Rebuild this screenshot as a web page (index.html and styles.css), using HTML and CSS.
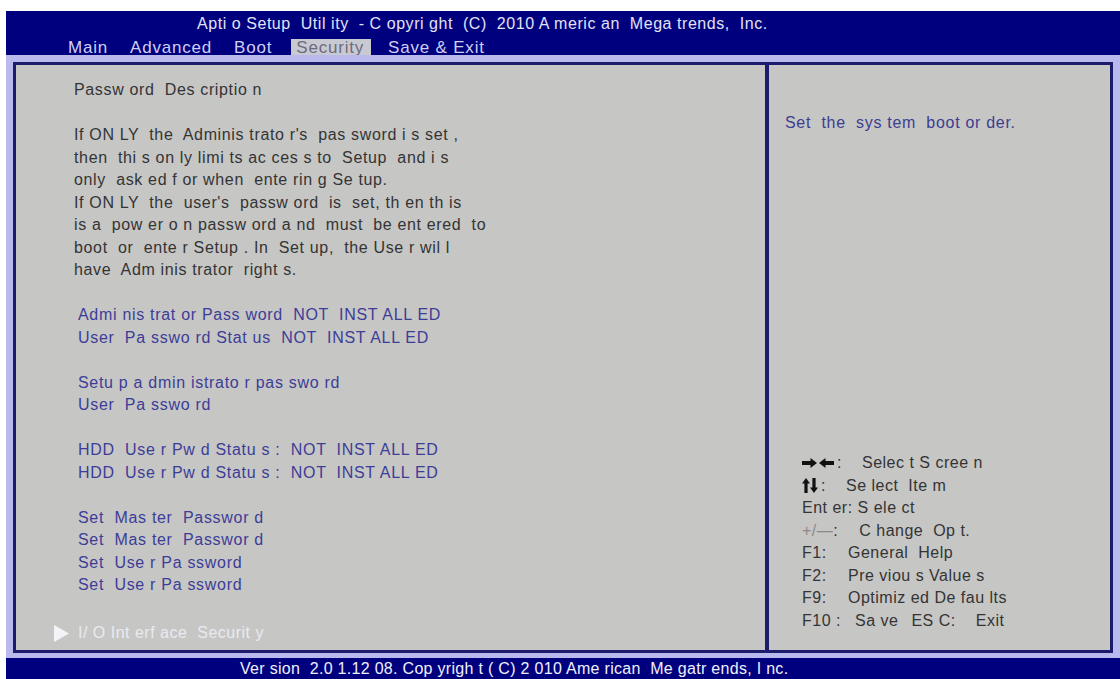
FILE: index.html
```html
<!DOCTYPE html>
<html>
<head>
<meta charset="utf-8">
<link rel="stylesheet" href="styles.css">
</head>
<body>
<div class="screen">
  <div class="header">
    <div class="title">Apti o Setup  Util ity  - C opyri ght  (C)  2010 A meric an  Mega trends,  Inc.</div>
    <div class="tabs">
      <span class="tab">Main</span>
      <span class="tab">Advanced</span>
      <span class="tab">Boot</span>
      <span class="tab active">Security</span>
      <span class="tab">Save &amp; Exit</span>
    </div>
  </div>
  <div class="body">
    <div class="panels">
      <div class="main-panel">
        <div class="line desc">Passw ord  Des criptio n</div>
        <div class="line blank"></div>
        <div class="line desc">If ON LY  the  Adminis trato r's  pas sword i s set ,</div>
        <div class="line desc">then  thi s on ly limi ts ac ces s to  Setup  and i s</div>
        <div class="line desc">only  ask ed f or when  ente rin g Se tup.</div>
        <div class="line desc">If ON LY  the  user's  passw ord  is  set, th en th is</div>
        <div class="line desc">is a  pow er o n passw ord a nd  must  be ent ered  to</div>
        <div class="line desc">boot  or  ente r Setup . In  Set up,  the Use r wil l</div>
        <div class="line desc">have  Adm inis trator  right s.</div>
        <div class="line blank"></div>
        <div class="line item">Admi nis trat or Pass word  NOT  INST ALL ED</div>
        <div class="line item">User  Pa sswo rd Stat us  NOT  INST ALL ED</div>
        <div class="line blank"></div>
        <div class="line item">Setu p a dmin istrato r pas swo rd</div>
        <div class="line item">User  Pa sswo rd</div>
        <div class="line blank"></div>
        <div class="line item">HDD  Use r Pw d Statu s :  NOT  INST ALL ED</div>
        <div class="line item">HDD  Use r Pw d Statu s :  NOT  INST ALL ED</div>
        <div class="line blank"></div>
        <div class="line item">Set  Mas ter  Passwor d</div>
        <div class="line item">Set  Mas ter  Passwor d</div>
        <div class="line item">Set  Use r Pa ssword</div>
        <div class="line item">Set  Use r Pa ssword</div>
        <div class="line blank"></div>
        <div class="line submenu"><svg class="tri" width="15" height="17" viewBox="0 0 15 17"><polygon points="0,0 15,8.5 0,17" fill="#f4f4f8"/></svg>I/ O Int erf ace  Securit y</div>
      </div>
      <div class="side-panel">
        <div class="help">Set  the  sys tem  boot or der.</div>
        <div class="keys">
          <div class="key-line"><svg class="arrows" width="32" height="10" viewBox="0 0 32 10"><path d="M0 3 H8.5 V0 L15 5 L8.5 10 V7 H0 Z" fill="#111"/><path d="M32 3 H23.5 V0 L17 5 L23.5 10 V7 H32 Z" fill="#111"/></svg><span class="k-sep">:</span><span class="k-desc wide">Selec t S cree n</span></div>
          <div class="key-line"><svg class="arrows" width="16" height="15" viewBox="0 0 16 15"><path d="M4 0 L8 5.5 H5.6 V15 H2.4 V5.5 H0 Z" fill="#111"/><path d="M12 15 L16 9.5 H13.6 V0 H10.4 V9.5 H8 Z" fill="#111"/></svg><span class="k-sep">:</span><span class="k-desc mid">Se lect  Ite m</span></div>
          <div class="key-line">Ent er: S ele ct</div>
          <div class="key-line"><span class="faint">+/—</span>:<span class="k-desc plus">C hange  Op t.</span></div>
          <div class="key-line"><span class="fkey">F1:</span><span class="k-desc">General  Help</span></div>
          <div class="key-line"><span class="fkey">F2:</span><span class="k-desc">Pre viou s Value s</span></div>
          <div class="key-line"><span class="fkey">F9:</span><span class="k-desc">Optimiz ed De fau lts</span></div>
          <div class="key-line"><span class="fkey f10">F10 :</span><span class="k-desc save">Sa ve</span><span class="k-esc">ES C:</span><span class="k-exit">Exit</span></div>
        </div>
      </div>
    </div>
  </div>
  <div class="footer">Ver sion  2.0 1.12 08. Cop yrigh t ( C) 2 010 Ame rican  Me gatr ends, I nc.</div>
</div>
</body>
</html>
```
FILE: styles.css
```css
* { box-sizing: border-box; }
html, body { margin: 0; padding: 0; background: #ffffff; }
body {
  width: 1120px;
  height: 679px;
  overflow: hidden;
  padding: 11px 0 0 6px;
  font-family: "Liberation Sans", Arial, sans-serif;
}
.screen {
  width: 1114px;
  height: 668px;
  display: flex;
  flex-direction: column;
}
.header {
  height: 44px;
  background: #00007e;
  padding-top: 3px;
  color: #e2e2f4;
}
.title {
  padding-left: 191px;
  font-size: 16px;
  line-height: 20px;
  white-space: pre;
  letter-spacing: 0.55px;
}
.tabs {
  margin-top: 5px;
  padding-left: 62px;
  display: flex;
  font-size: 17px;
  line-height: 17px;
  color: #cfcff2;
}
.tab {
  margin-right: 22px;
  letter-spacing: 0.8px;
}
.tab.active {
  background: #c9c9d2;
  color: #6c6c80;
  padding: 0 7px 0 5px;
  margin-left: -3px;
  margin-right: 17px;
}
.body {
  flex: 1;
  background: #b9b9ee;
  padding: 7px 7px 5px 7px;
}
.panels {
  height: 100%;
  border: 3px solid #1d1b6c;
  background: #1d1b6c;
  display: grid;
  grid-template-columns: 1fr 341px;
  column-gap: 4px;
}
.main-panel {
  background: #c6c6c5;
  padding: 14px 0 0 58px;
  font-size: 16px;
  line-height: 22.5px;
}
.line { white-space: pre; height: 22.5px; }
.desc { color: #343434; letter-spacing: 0.65px; }
.item { color: #3d3d97; padding-left: 4px; letter-spacing: 0.7px; }
.submenu {
  color: #eaeaf0;
  margin-top: 3px;
  margin-left: -20px;
  display: flex;
  align-items: center;
  letter-spacing: 0.5px;
}
.tri { margin-right: 9px; }
.side-panel {
  background: #c6c6c5;
  display: flex;
  flex-direction: column;
  padding: 47px 0 18px 16px;
  font-size: 16px;
  line-height: 22.5px;
}
.help { color: #3d3d8f; white-space: pre; letter-spacing: 0.7px; }
.keys {
  margin-top: auto;
  padding-left: 17px;
  color: #343434;
  letter-spacing: 0.5px;
}
.key-line {
  white-space: pre;
  height: 22.5px;
  display: flex;
  align-items: center;
}
.arrows { flex: none; }
.k-sep { margin-left: 3px; }
.k-desc { margin-left: 22px; }
.k-desc.wide { margin-left: 20px; }
.k-desc.mid { margin-left: 20px; }
.k-desc.plus { margin-left: 21px; }
.faint { color: #8a8a8a; }
.fkey { width: 24px; }
.fkey.f10 { width: 34px; }
.k-desc.save { margin-left: 19px; }
.k-esc { margin-left: 13px; }
.k-exit { margin-left: 20px; }
.footer {
  height: 21px;
  background: #00007e;
  color: #f0f0fa;
  font-size: 16px;
  line-height: 21px;
  padding-left: 234px;
  white-space: pre;
  letter-spacing: 0.3px;
}
```
